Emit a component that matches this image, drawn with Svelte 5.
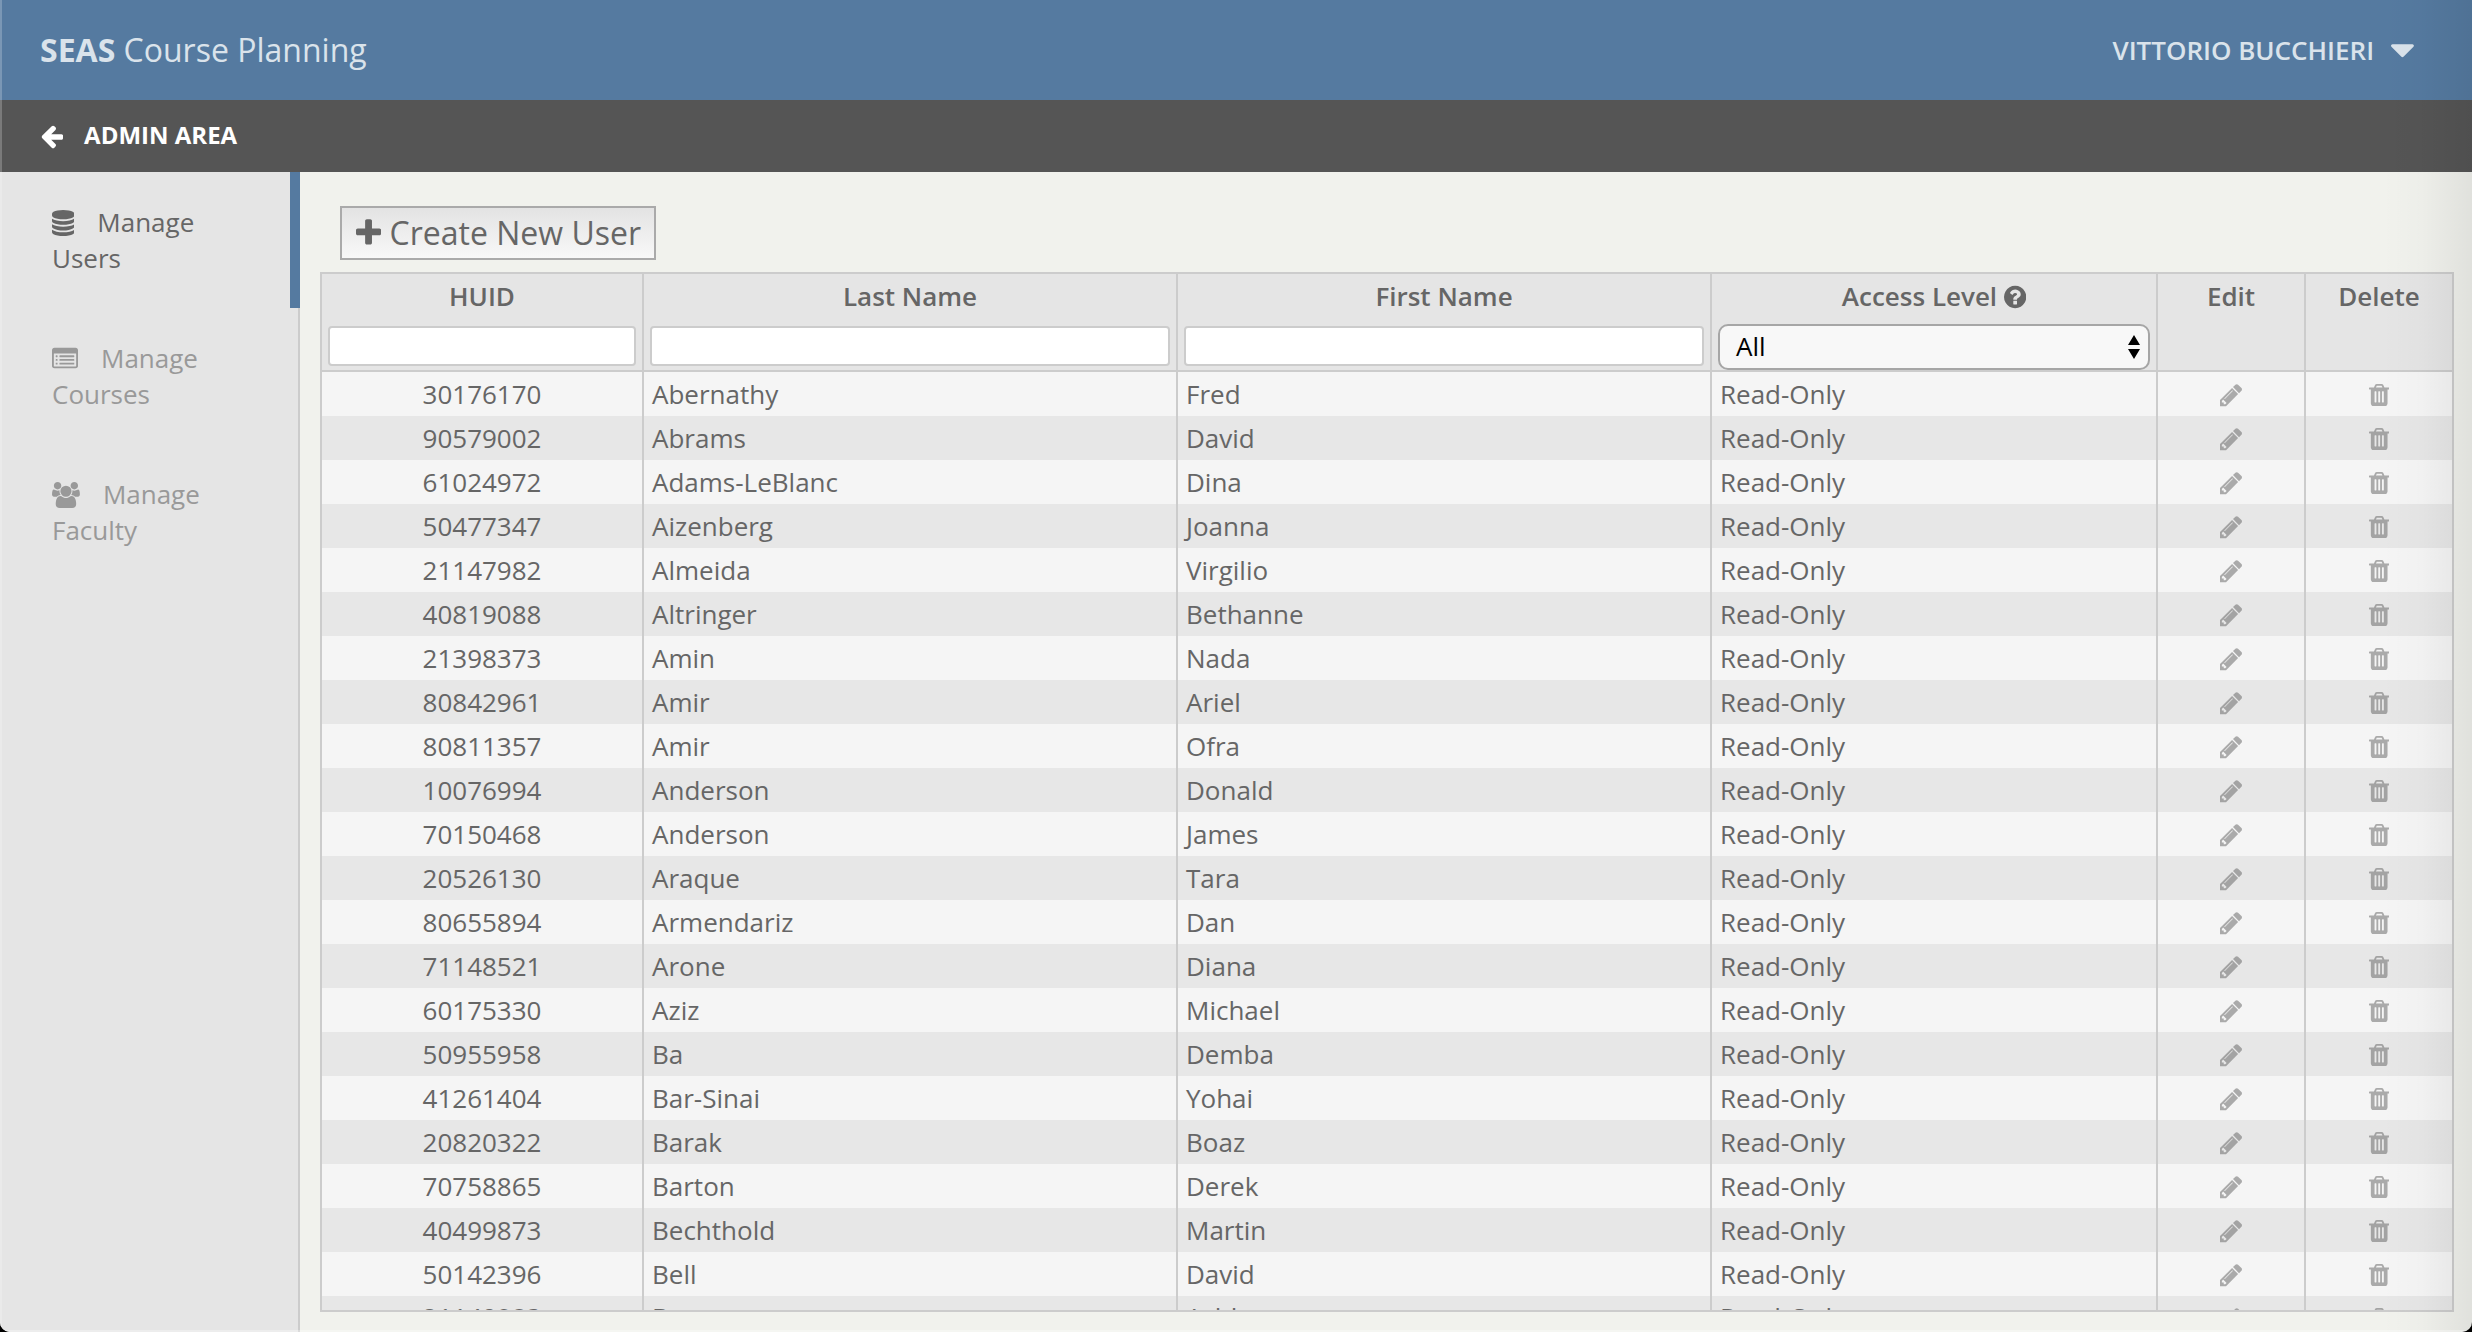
<script>
  const icons = {
    arrowLeft: { box: '0 0 1664 1792', w: 24.1, d: 'M1664 896v128q0 53-32.5 90.5t-84.5 37.5h-704l293 294q38 36 38 90t-38 90l-75 76q-37 37-90 37-52 0-91-37l-651-652q-37-37-37-90 0-52 37-91l651-650q38-38 91-38 52 0 90 38l75 74q38 38 38 91t-38 91l-293 293h704q52 0 84.5 37.5t32.5 90.5z' },
    caretDown: { box: '384 0 1024 1792', w: 22.9, d: 'M1408 704q0 26-19 45l-448 448q-19 19-45 19t-45-19l-448-448q-19-19-19-45t19-45 45-19h896q26 0 45 19t19 45z' },
    plus: { box: '192 0 1408 1792', w: 25.1, d: 'M1600 736v192q0 40-28 68t-68 28h-416v416q0 40-28 68t-68 28h-192q-40 0-68-28t-28-68v-416h-416q-40 0-68-28t-28-68v-192q0-40 28-68t68-28h416v-416q0-40 28-68t68-28h192q40 0 68 28t28 68v416h416q40 0 68 28t28 68z' },
    database: { box: '128 0 1536 1792', w: 22.3, d: 'M896 768q237 0 443-43t325-127v170q0 69-103 128t-280 93.5-385 34.5-385-34.5-280-93.5-103-128v-170q119 84 325 127t443 43zm0 768q237 0 443-43t325-127v170q0 69-103 128t-280 93.5-385 34.5-385-34.5-280-93.5-103-128v-170q119 84 325 127t443 43zm0-384q237 0 443-43t325-127v170q0 69-103 128t-280 93.5-385 34.5-385-34.5-280-93.5-103-128v-170q119 84 325 127t443 43zm0-1152q208 0 385 34.5t280 93.5 103 128v128q0 69-103 128t-280 93.5-385 34.5-385-34.5-280-93.5-103-128v-128q0-69 103-128t280-93.5 385-34.5z' },
    list: { box: '0 0 1792 1792', w: 26, d: 'M384 1184v64q0 13-9.5 22.5t-22.5 9.5h-64q-13 0-22.5-9.5t-9.5-22.5v-64q0-13 9.5-22.5t22.5-9.5h64q13 0 22.5 9.5t9.5 22.5zm0-256v64q0 13-9.5 22.5t-22.5 9.5h-64q-13 0-22.5-9.5t-9.5-22.5v-64q0-13 9.5-22.5t22.5-9.5h64q13 0 22.5 9.5t9.5 22.5zm0-256v64q0 13-9.5 22.5t-22.5 9.5h-64q-13 0-22.5-9.5t-9.5-22.5v-64q0-13 9.5-22.5t22.5-9.5h64q13 0 22.5 9.5t9.5 22.5zm1152 512v64q0 13-9.5 22.5t-22.5 9.5h-960q-13 0-22.5-9.5t-9.5-22.5v-64q0-13 9.5-22.5t22.5-9.5h960q13 0 22.5 9.5t9.5 22.5zm0-256v64q0 13-9.5 22.5t-22.5 9.5h-960q-13 0-22.5-9.5t-9.5-22.5v-64q0-13 9.5-22.5t22.5-9.5h960q13 0 22.5 9.5t9.5 22.5zm0-256v64q0 13-9.5 22.5t-22.5 9.5h-960q-13 0-22.5-9.5t-9.5-22.5v-64q0-13 9.5-22.5t22.5-9.5h960q13 0 22.5 9.5t9.5 22.5zm128 704v-832q0-13-9.5-22.5t-22.5-9.5h-1472q-13 0-22.5 9.5t-9.5 22.5v832q0 13 9.5 22.5t22.5 9.5h1472q13 0 22.5-9.5t9.5-22.5zm128-1088v1088q0 66-47 113t-113 47h-1472q-66 0-113-47t-47-113v-1088q0-66 47-113t113-47h1472q66 0 113 47t47 113z' },
    users: { box: '0 0 1920 1792', w: 27.9, d: 'M593 896q-162 5-265 128h-134q-82 0-138-40.5t-56-118.5q0-353 124-353 6 0 43.5 21t97.5 42.5 119 21.5q67 0 133-23-5 37-5 66 0 139 81 256zm1071 637q0 120-73 189.5t-194 69.5h-874q-121 0-194-69.5t-73-189.5q0-53 3.5-103.5t14-109 26.5-108.5 43-97.5 62-81 85.5-53.5 111.5-20q10 0 43 21.5t73 48 107 48 135 21.5 135-21.5 107-48 73-48 43-21.5q61 0 111.5 20t85.5 53.5 62 81 43 97.5 26.5 108.5 14 109 3.5 103.5zm-1024-1277q0 106-75 181t-181 75-181-75-75-181 75-181 181-75 181 75 75 181zm704 384q0 159-112.5 271.5t-271.5 112.5-271.5-112.5-112.5-271.5 112.5-271.5 271.5-112.5 271.5 112.5 112.5 271.5zm576 225q0 78-56 118.5t-138 40.5h-134q-103-123-265-128 81-117 81-256 0-29-5-66 66 23 133 23 59 0 119-21.5t97.5-42.5 43.5-21q124 0 124 353zm-128-609q0 106-75 181t-181 75-181-75-75-181 75-181 181-75 181 75 75 181z' },
    help: { box: '128 0 1536 1792', w: 22.3, d: 'M1024 1376v-192q0-14-9-23t-23-9h-192q-14 0-23 9t-9 23v192q0 14 9 23t23 9h192q14 0 23-9t9-23zm256-672q0-88-55.5-163t-138.5-116-170-41q-243 0-371 213-15 24 8 42l132 100q7 6 19 6 16 0 25-12 53-68 86-92 34-24 86-24 48 0 85.5 26t37.5 59q0 38-20 61t-68 45q-63 28-115.5 86.5t-52.5 125.5v36q0 14 9 23t23 9h192q14 0 23-9t9-23q0-19 21.5-49.5t54.5-49.5q32-18 49-28.5t46-35 44.5-48 28-60.5 12.5-81zm384 192q0 209-103 385.5t-279.5 279.5-385.5 103-385.5-103-279.5-279.5-103-385.5 103-385.5 279.5-279.5 385.5-103 385.5 103 279.5 279.5 103 385.5z' },
    pencil: { box: '128 0 1536 1792', w: 22.3, d: 'M491 1536l91-91-235-235-91 91v107h128v128h107zm523-928q0-22-22-22-10 0-17 7l-542 542q-7 7-7 17 0 22 22 22 10 0 17-7l542-542q7-7 7-17zm-54-192l416 416-832 832h-416v-416zm683 96q0 53-37 90l-166 166-416-416 166-165q36-38 90-38 53 0 91 38l235 234q37 39 37 91z' },
    trash: { box: '192 0 1408 1792', w: 20.4, d: 'M704 1376v-704q0-14-9-23t-23-9h-64q-14 0-23 9t-9 23v704q0 14 9 23t23 9h64q14 0 23-9t9-23zm256 0v-704q0-14-9-23t-23-9h-64q-14 0-23 9t-9 23v704q0 14 9 23t23 9h64q14 0 23-9t9-23zm256 0v-704q0-14-9-23t-23-9h-64q-14 0-23 9t-9 23v704q0 14 9 23t23 9h64q14 0 23-9t9-23zm-544-992h448l-48-117q-7-9-17-11h-317q-10 2-17 11zm928 32v64q0 14-9 23t-23 9h-96v948q0 83-47 143.5t-113 60.5h-832q-66 0-113-58.5t-47-141.5v-952h-96q-14 0-23-9t-9-23v-64q0-14 9-23t23-9h309l70-167q15-37 54-63t79-26h320q40 0 79 26t54 63l70 167h309q14 0 23 9t9 23z' }
  };

  const nav = [
    { icon: 'database', label: 'Users', active: true },
    { icon: 'list', label: 'Courses', active: false },
    { icon: 'users', label: 'Faculty', active: false }
  ];

  const users = [
    ['30176170', 'Abernathy', 'Fred'],
    ['90579002', 'Abrams', 'David'],
    ['61024972', 'Adams-LeBlanc', 'Dina'],
    ['50477347', 'Aizenberg', 'Joanna'],
    ['21147982', 'Almeida', 'Virgilio'],
    ['40819088', 'Altringer', 'Bethanne'],
    ['21398373', 'Amin', 'Nada'],
    ['80842961', 'Amir', 'Ariel'],
    ['80811357', 'Amir', 'Ofra'],
    ['10076994', 'Anderson', 'Donald'],
    ['70150468', 'Anderson', 'James'],
    ['20526130', 'Araque', 'Tara'],
    ['80655894', 'Armendariz', 'Dan'],
    ['71148521', 'Arone', 'Diana'],
    ['60175330', 'Aziz', 'Michael'],
    ['50955958', 'Ba', 'Demba'],
    ['41261404', 'Bar-Sinai', 'Yohai'],
    ['20820322', 'Barak', 'Boaz'],
    ['70758865', 'Barton', 'Derek'],
    ['40499873', 'Bechthold', 'Martin'],
    ['50142396', 'Bell', 'David'],
    ['21140983', 'Berger', 'Ashley']
  ];
</script>

{#snippet icon(name)}
  <svg class="icon {name}" viewBox={icons[name].box} width={icons[name].w} aria-hidden="true"><path d={icons[name].d} /></svg>
{/snippet}

<div class="app">
  <header class="top">
    <div class="brand"><b>SEAS</b> Course Planning</div>
    <div class="account"><span>VITTORIO BUCCHIERI</span>{@render icon('caretDown')}</div>
  </header>
  <div class="admin">{@render icon('arrowLeft')}<span>ADMIN AREA</span></div>
  <div class="body">
    <nav>
      {#each nav as item}
        <a class="item" class:active={item.active}>{@render icon(item.icon)}Manage {item.label}</a>
      {/each}
    </nav>
    <main>
      <button class="create">{@render icon('plus')}<span>Create New User</span></button>
      <div class="grid">
        <div class="row head">
          <div class="cell"><span class="label">HUID</span><input aria-label="HUID" /></div>
          <div class="cell"><span class="label">Last Name</span><input aria-label="Last Name" /></div>
          <div class="cell"><span class="label">First Name</span><input aria-label="First Name" /></div>
          <div class="cell">
            <span class="label">Access Level {@render icon('help')}</span>
            <div class="select">
              <span>All</span>
              <svg width="12" height="24" viewBox="0 0 12 24" aria-hidden="true"><path d="M6 0l6 10H0zM6 24l6-10H0z" /></svg>
            </div>
          </div>
          <div class="cell"><span class="label">Edit</span></div>
          <div class="cell"><span class="label">Delete</span></div>
        </div>
        <div class="rows">
          {#each users as [id, last, first]}
            <div class="row">
              <div class="cell id">{id}</div>
              <div class="cell">{last}</div>
              <div class="cell">{first}</div>
              <div class="cell">Read-Only</div>
              <div class="cell action">{@render icon('pencil')}</div>
              <div class="cell action">{@render icon('trash')}</div>
            </div>
          {/each}
        </div>
      </div>
    </main>
  </div>
  <div class="shade"></div>
</div>

<style>
  :global(body) { margin: 0; background: #000; }
  .app {
    position: relative;
    width: 2472px;
    height: 1332px;
    display: flex;
    flex-direction: column;
    overflow: hidden;
    border-radius: 0 0 10px 10px;
    background: #f1f2ed;
    color: #666;
    font: 26px/36px "Open Sans", sans-serif;
  }
  .icon { height: 26px; fill: currentColor; flex: none; }
  .top {
    height: 100px;
    flex: none;
    box-sizing: border-box;
    padding: 0 58px 0 40px;
    display: flex;
    align-items: center;
    justify-content: space-between;
    background: #557aa0;
    color: #dae3eb;
  }
  .brand { font-size: 32px; line-height: 44px; }
  .account { display: flex; align-items: center; gap: 17px; font-weight: 600; }
  .caretDown { height: 40px; }
  .admin {
    height: 72px;
    flex: none;
    box-sizing: border-box;
    padding: 0 0 2px 39px;
    display: flex;
    align-items: center;
    gap: 21px;
    background: #555;
    color: #fff;
    font-size: 24px;
    font-weight: 700;
  }
  .arrowLeft { margin-top: 2px; }
  .body { flex: 1; min-height: 0; display: flex; }
  nav {
    width: 300px;
    flex: none;
    box-sizing: border-box;
    background: #e5e5e5;
    box-shadow: inset -2px 0 #ccc;
  }
  .item {
    display: block;
    box-sizing: border-box;
    height: 136px;
    padding: 32px 50px 32px 52px;
    color: #999;
  }
  .item .icon { vertical-align: -3.7px; margin-right: 23px; }
  .item.active { color: #666; border-right: 10px solid #557aa0; }
  main {
    flex: 1;
    min-width: 0;
    padding: 34px 18px 20px 20px;
    display: flex;
    flex-direction: column;
    align-items: flex-start;
  }
  .create {
    width: 316px;
    height: 54px;
    margin: 0 0 12px 20px;
    padding: 0 0 0 14px;
    box-sizing: border-box;
    border: 2px solid #aaa;
    display: flex;
    align-items: center;
    gap: 8.5px;
    background: linear-gradient(#e3e3e3, #f8f8f8);
    color: #666;
    font: 32px/44px "Open Sans", sans-serif;
    white-space: nowrap;
  }
  .plus { height: 32px; }
  .grid {
    align-self: stretch;
    flex: 1;
    min-height: 0;
    display: flex;
    flex-direction: column;
    border: 2px solid #ccc;
  }
  .row {
    display: grid;
    grid-template-columns: 322px 534px 534px 446px 148px 146px;
    height: 44px;
    background: #f5f5f5;
  }
  .row:nth-child(even) { background: #e7e7e7; }
  .rows { flex: 1; min-height: 0; overflow: hidden; }
  .cell {
    box-sizing: border-box;
    padding: 4px 8px;
    border-right: 2px solid #ccc;
  }
  .rows .row:last-child .cell:not(.action) { padding-top: 3px; }
  .cell:last-child { border-right: 0; }
  .id { text-align: center; }
  .action { display: flex; align-items: center; justify-content: center; padding: 1px 0 0; color: rgba(102, 102, 102, .52); }
  .head { height: 96px; flex: none; background: #e5e5e5; border-bottom: 2px solid #ccc; }
  .head .cell {
    padding: 4px 6px;
    display: flex;
    flex-direction: column;
    align-items: stretch;
  }
  .label { height: 36px; text-align: center; font-weight: 600; }
  .help { vertical-align: -3.7px; }
  input {
    height: 40px;
    margin-top: 12px;
    box-sizing: border-box;
    border: 2px solid #ccc;
    border-radius: 4px;
    background: #fff;
  }
  .select {
    height: 46px;
    margin-top: 10px;
    box-sizing: border-box;
    padding: 0 8px 2px 16px;
    display: flex;
    align-items: center;
    justify-content: space-between;
    border: 2px solid #a6a6a6;
    border-radius: 10px;
    background: #f8f8f8;
    color: #000;
  }
  .select svg { margin-top: 2px; }
  .shade {
    position: absolute;
    inset: 0;
    pointer-events: none;
    background: linear-gradient(to right, rgba(0, 0, 0, 0) 2382px, rgba(0, 0, 0, .015) 2420px, rgba(0, 0, 0, .07) 2472px);
    box-shadow: inset 2px 0 rgba(255, 255, 255, .22), inset 0 -2px rgba(255, 255, 255, .3);
  }
</style>
